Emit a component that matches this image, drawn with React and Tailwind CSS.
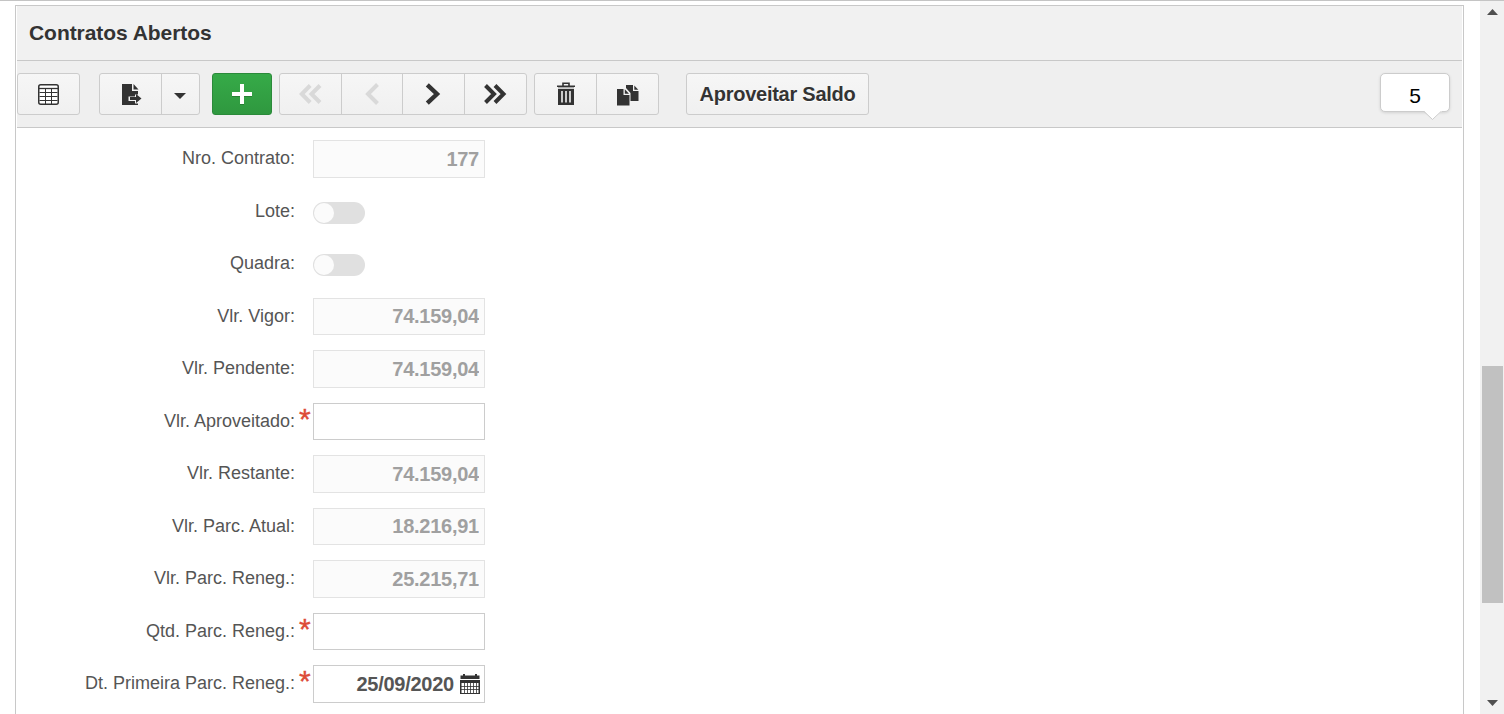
import React, { useState } from 'react';

const GridIcon = () => (
  <svg width="21" height="21" viewBox="0 0 21 21" fill="none" stroke="#333">
    <rect x="0.750" y="0.750" width="19.500" height="19.500" rx="2" strokeWidth="1.500" fill="#fff" />
    <path d="M1 4.500h19" strokeWidth="1.300" />
    <path d="M1.500 8.500h18M1.500 12.500h18M1.500 16.500h18M7.500 5v15M13.500 5v15" strokeWidth="1" />
  </svg>
);

const ExportIcon = () => (
  <svg width="20" height="22" viewBox="0 0 20 22" fill="#333">
    <path d="M0 0H10V7H16V10.5H13V12.5H6.500V17H13V19.500H16V21H0Z" />
    <path d="M11.500 0L16.500 5.500H11.500Z" />
    <path d="M8 13H14V10L19.500 14.500L14 19V16H8Z" />
  </svg>
);

const PlusIcon = () => (
  <svg className="drop-shadow-[0_1px_0_rgba(0,0,0,0.2)]" width="22" height="20" viewBox="0 0 22 20" fill="#fff">
    <path d="M9 0h4v8h8v4h-8v8H9v-8H1V8h8z" />
  </svg>
);

const FirstIcon = () => (
  <svg width="24" height="20" viewBox="0 0 24 20" fill="none" stroke="currentColor" strokeWidth="4">
    <path d="M11.200 1.500L2.800 10L11.200 18.500M21 1.500L12.500 10L21 18.500" />
  </svg>
);

const PrevIcon = () => (
  <svg width="14" height="22" viewBox="0 0 14 22" fill="none" stroke="currentColor" strokeWidth="4">
    <path d="M12.500 1.500L3 11L12.500 20.500" />
  </svg>
);

const NextIcon = () => (
  <svg width="16" height="22" viewBox="0 0 16 22" fill="none" stroke="currentColor" strokeWidth="4.400">
    <path d="M2.300 1.800L12 11L2.300 20.200" />
  </svg>
);

const LastIcon = () => (
  <svg width="24" height="20" viewBox="0 0 24 20" fill="none" stroke="currentColor" strokeWidth="4">
    <path d="M1.500 1.500L10 10L1.500 18.500M11 1.500L19.500 10L11 18.500" />
  </svg>
);

const TrashIcon = () => (
  <svg width="18" height="23" viewBox="0 0 18 23">
    <path d="M6 4V1.200H12V4" fill="none" stroke="#333" strokeWidth="1.600" />
    <path d="M0 3.500H18V5H0Z" fill="#333" />
    <path d="M1 5h16v1.500H1z" fill="#aaa" />
    <path d="M1 7H17V23H1Z" fill="#333" />
    <path d="M5 9v11.500M9 9v11.500M13 9v11.500" stroke="#f3f3f3" strokeWidth="1.600" />
  </svg>
);

const CopyIcon = () => (
  <svg width="22" height="21" viewBox="0 0 22 21" fill="#333">
    <path d="M9 0H16V6H21.500V16H13.500V8L9 3Z" />
    <path d="M17.300 0.500L21.300 4.800H17.300Z" />
    <path d="M0 4H6.500V10H12.500V20.500H0Z" />
    <path d="M7.800 4.300L12 8.800H7.800Z" />
  </svg>
);

const CalendarIcon = () => (
  <svg width="20" height="20" viewBox="0 0 20 20">
    <path d="M3 0H5V1.500H15V0H17V1.500H19.500V5H0.500V1.500H3Z" fill="#333" />
    <path d="M0 6H20V20H0Z" fill="#333" />
    <path d="M1.500 9h17v10h-17z" fill="#fff" />
    <path d="M1 12.500h18M1 15.500h18M4.500 9v10M7.500 9v10M10.500 9v10M13.500 9v10M16.500 9v10" stroke="#333" strokeWidth="0.800" />
  </svg>
);

const fields = [
  { label: 'Nro. Contrato:', value: '177' },
  { label: 'Lote:', type: 'switch' },
  { label: 'Quadra:', type: 'switch' },
  { label: 'Vlr. Vigor:', value: '74.159,04' },
  { label: 'Vlr. Pendente:', value: '74.159,04' },
  { label: 'Vlr. Aproveitado:', value: '', required: true },
  { label: 'Vlr. Restante:', value: '74.159,04' },
  { label: 'Vlr. Parc. Atual:', value: '18.216,91' },
  { label: 'Vlr. Parc. Reneg.:', value: '25.215,71' },
  { label: 'Qtd. Parc. Reneg.:', value: '', required: true },
  { label: 'Dt. Primeira Parc. Reneg.:', value: '25/09/2020', required: true, type: 'date' },
];

const group = 'flex h-[42px] shrink-0 rounded-[3px] border border-[#ccc] bg-linear-to-b from-[#f6f6f6] to-[#f0f0f0] divide-x divide-[#ccc]';
const cell = 'flex items-center justify-center disabled:text-[#d9d9d9]';

const Toolbar = () => (
  <div className="flex h-[67px] items-start border-b border-[#c8c8c8] bg-[#efefef] pt-3 text-[#333]">
    <div className={group}>
      <button className={`${cell} w-[61px] pt-px`}><GridIcon /></button>
    </div>
    <div className={`${group} ml-[19px]`}>
      <button className={`${cell} w-[62px] pt-0.5 pl-0.5`}><ExportIcon /></button>
      <button className={`${cell} w-[37px] pt-1 pr-0.5`}>
        <svg width="12" height="6" viewBox="0 0 12 6" fill="#333"><path d="M0 0h12L6 6z" /></svg>
      </button>
    </div>
    <button className="ml-3 flex h-[42px] w-[60px] items-center justify-center rounded-[3px] border border-[#2b8a3a] bg-linear-to-b from-[#36aa48] to-[#2f983f]">
      <PlusIcon />
    </button>
    <div className={`${group} ml-[7px]`}>
      <button disabled className={`${cell} w-[62px]`}><FirstIcon /></button>
      <button disabled className={`${cell} w-[61px]`}><PrevIcon /></button>
      <button className={`${cell} w-[62px] pr-px`}><NextIcon /></button>
      <button className={`${cell} w-[61px]`}><LastIcon /></button>
    </div>
    <div className={`${group} ml-[7px]`}>
      <button className={`${cell} w-[62px] pb-0.5`}><TrashIcon /></button>
      <button className={`${cell} w-[61px] pt-0.5`}><CopyIcon /></button>
    </div>
    <button className="ml-[27px] flex h-[42px] w-[183px] items-center justify-center rounded-[3px] border border-[#ccc] bg-linear-to-b from-[#f6f6f6] to-[#f0f0f0] pb-px text-[20px] font-bold tracking-[-0.250px] text-shadow-[0_1px_0_#fff]">
      Aproveitar Saldo
    </button>
    <div className="relative mr-3 ml-auto flex h-[39px] w-[70px] items-center justify-center rounded-[5px] border border-[#ccc] bg-white pt-1.5 text-[21px] text-black shadow-[0_1px_3px_rgba(0,0,0,0.12)]">
      5
      <svg className="absolute top-[36px] left-[42px]" width="20" height="11" viewBox="0 0 20 11">
        <path d="M0 0H20L10 9.500Z" fill="#fff" />
        <path d="M1 1.500L9.500 9.500L18 1.500" fill="none" stroke="#ccc" />
      </svg>
    </div>
  </div>
);

const Switch = () => {
  const [on, setOn] = useState(false);
  return (
    <button
      role="switch"
      aria-checked={on}
      onClick={() => setOn(!on)}
      className={`mt-[9px] flex h-[22px] w-[52px] items-center rounded-full bg-[#e0e0e0] px-px ${on ? 'justify-end' : 'justify-start'}`}
    >
      <span className="h-5 w-5 rounded-full bg-[#fbfbfb]"></span>
    </button>
  );
};

const Field = ({ label, value, required, type }) => {
  const editable = required;
  return (
    <div className="flex h-[52.500px] shrink-0 items-start">
      <label className="w-[279px] pt-[4.900px] text-right text-[18px] leading-[27px] text-[#555]">{label}</label>
      <span className="w-[18px] pt-[1.800px] pl-1 text-[30px] leading-[28px] text-[#dd4b39] [-webkit-text-stroke:0.4px_#dd4b39]">{required ? '*' : ''}</span>
      {type === 'switch' ? (
        <Switch />
      ) : (
        <div className={`flex h-[37.500px] w-[172px] items-center border ${editable ? 'border-[#ccc] bg-white text-[#555]' : 'border-[#e3e3e3] bg-[#fbfbfb] text-[#a0a0a0]'}`}>
          <input
            readOnly={!editable}
            defaultValue={value}
            className="h-full w-full min-w-0 bg-transparent pr-[5px] text-right text-[20px] font-bold tracking-[-0.250px] outline-none"
          />
          {type === 'date' && <span className="mr-1 ml-px shrink-0"><CalendarIcon /></span>}
        </div>
      )}
    </div>
  );
};

const Scrollbar = () => (
  <div className="flex h-full w-6 shrink-0 flex-col items-center bg-[#f1f1f1]">
    <svg className="mt-2 shrink-0" width="11" height="6" viewBox="0 0 11 6" fill="#505050"><path d="M0 6L5.500 0L11 6z" /></svg>
    <div className="mt-[351px] h-[237px] w-[21px] shrink-0 bg-[#c1c1c1]"></div>
    <svg className="mt-auto mb-2 shrink-0" width="11" height="6" viewBox="0 0 11 6" fill="#505050"><path d="M0 0h11L5.500 6z" /></svg>
  </div>
);

const App = () => {
  return (
    <main className="flex h-screen w-screen overflow-hidden border-t border-[#c4c4c4] bg-white font-['Liberation_Sans',Arial,sans-serif]">
      <div className="min-w-0 flex-1 overflow-hidden pt-1 pr-4 pl-[15px]">
        <section className="h-[800px] border border-[#c8c8c8]">
          <div className="mr-px ml-px">
            <h1 className="flex h-[55px] items-center border-b border-[#c8c8c8] bg-[#f1f1f1] pl-3 text-[21px] font-bold tracking-[-0.050px] text-[#333]">
              Contratos Abertos
            </h1>
            <Toolbar />
          </div>
          <form className="flex flex-col pt-[12.300px]">
            {fields.map((field) => (
              <Field key={field.label} {...field} />
            ))}
          </form>
        </section>
      </div>
      <Scrollbar />
    </main>
  );
};

export default App;
